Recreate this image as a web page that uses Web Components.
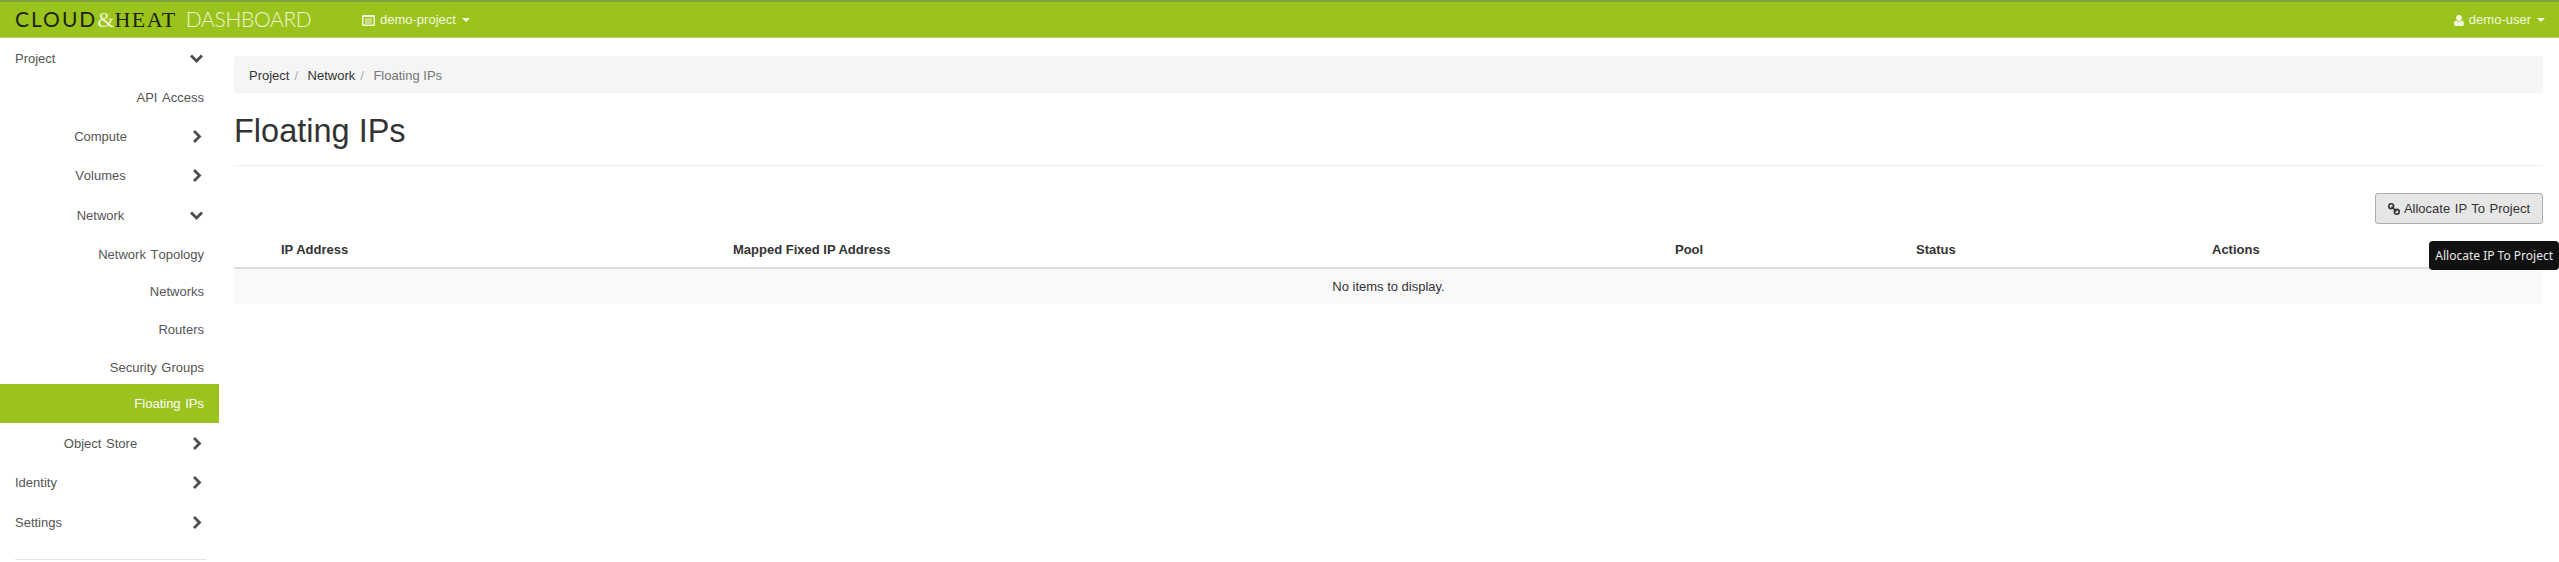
<!DOCTYPE html>
<html>
<head>
<meta charset="utf-8">
<title>Floating IPs</title>
<style>
  html, body { margin: 0; padding: 0; background: #fff; }
  body { font: 13px/18px "Liberation Sans", Arial, sans-serif; color: #333; height: 562px; overflow: hidden; }
</style>
</head>
<body>
<app-shell>
  <top-bar slot="top"></top-bar>
  <side-nav slot="side">
    <nav-row kind="head" h="40" open>Project</nav-row>
    <nav-row h="38">API Access</nav-row>
    <nav-row kind="group" h="40">Compute</nav-row>
    <nav-row kind="group" h="39">Volumes</nav-row>
    <nav-row kind="group" h="40" open>Network</nav-row>
    <nav-row h="38">Network Topology</nav-row>
    <nav-row h="37">Networks</nav-row>
    <nav-row h="38">Routers</nav-row>
    <nav-row h="36" nudge="3">Security Groups</nav-row>
    <nav-row h="39" active>Floating IPs</nav-row>
    <nav-row kind="group" h="40">Object Store</nav-row>
    <nav-row kind="head" h="39">Identity</nav-row>
    <nav-row kind="head" h="40">Settings</nav-row>
  </side-nav>
  <floating-page slot="main"></floating-page>
</app-shell>

<script>
class AppShell extends HTMLElement {
  constructor() {
    super();
    this.attachShadow({ mode: 'open' });
    this.shadowRoot.innerHTML = `
      <style>
        :host { display: block; }
        .body { display: flex; align-items: flex-start; }
        .side { flex: 0 0 219px; }
        .main { flex: 1; min-width: 0; padding: 0 16px 0 15px; }
      </style>
      <slot name="top"></slot>
      <div class="body">
        <div class="side"><slot name="side"></slot></div>
        <div class="main"><slot name="main"></slot></div>
      </div>
    `;
  }
}

class TopBar extends HTMLElement {
  constructor() {
    super();
    this.attachShadow({ mode: 'open' });
    this.shadowRoot.innerHTML = `
      <style>
        :host { display: flex; align-items: center; height: 38px; box-sizing: border-box; background: #9bc31e;
          border-top: 2px solid #7f9f45; border-bottom: 1px solid #c3d27c; color: #f3f8df; font-size: 13px; }
        .logo { margin-left: 15px; width: 347px; font-size: 21px; line-height: 24px; white-space: nowrap; flex: none; }
        .c { font-family: "Lato", sans-serif; color: #1c2410; letter-spacing: 2px; }
        .h { font-family: "Liberation Serif", serif; font-size: 22px; color: #1c2410; letter-spacing: 1.5px; }
        .a { font-family: "Liberation Serif", serif; font-size: 22px; color: #eef5d0; }
        .d { font-family: "Lato", sans-serif; font-weight: 300; color: #eef5d0; margin-left: 9px; letter-spacing: -.3px; }
        .menu { display: flex; align-items: center; gap: 5px; padding-top: 1px; }
        .spacer { flex: 1; }
        .caret { width: 0; height: 0; border: 4px solid transparent; border-top-color: #f3f8df; border-bottom: 0; margin-left: 1px; }
        svg { display: block; fill: #f3f8df; }
        .user { margin-right: 14px; }
      </style>
      <div class="logo"><span class="c">CLOUD</span><span class="a">&amp;</span><span class="h">HEAT</span><span class="d">DASHBOARD</span></div>
      <div class="menu">
        <svg width="13" height="11" viewBox="0 0 13 11"><path fill-rule="evenodd" d="M1 0h11a1 1 0 0 1 1 1v9a1 1 0 0 1-1 1H1a1 1 0 0 1-1-1V1a1 1 0 0 1 1-1zm.5 2v7.500h10V2zM3 3.500h7v1H3zM3 5.500h7v1H3zM3 7.500h7v1H3z"/></svg>
        <span>demo-project</span><i class="caret"></i>
      </div>
      <div class="spacer"></div>
      <div class="menu user">
        <svg width="10" height="11" viewBox="0 0 10 11"><path d="M5 0a2.800 2.800 0 0 1 2.800 3C7.800 4.600 6.600 6 5 6S2.200 4.600 2.200 3A2.800 2.800 0 0 1 5 0zM2.300 5.600C3 6.300 4 6.800 5 6.800s2-.5 2.700-1.200C9.200 5.800 10 7 10 9c0 1.300-.8 2-2 2H2c-1.200 0-2-.7-2-2 0-2 .8-3.200 2.300-3.400z"/></svg>
        <span>demo-user</span><i class="caret"></i>
      </div>
    `;
  }
}

class SideNav extends HTMLElement {
  constructor() {
    super();
    this.attachShadow({ mode: 'open' });
    this.shadowRoot.innerHTML = `
      <style>
        :host { display: block; }
        hr { border: 0; border-top: 1px solid #e4e4e4; margin: 17px 13px 0 15px; }
      </style>
      <slot></slot>
      <hr>
    `;
  }
}

class NavRow extends HTMLElement {
  constructor() {
    super();
    this.attachShadow({ mode: 'open' });
    const kind = this.getAttribute('kind') || 'item';
    const chevron = this.hasAttribute('open') ? 'M2 4.500 7.500 10 13 4.500' : 'M5 2l5.500 5.500L5 13';
    const icon = kind === 'item' ? '' :
      `<svg width="15" height="15" viewBox="0 0 15 15"><path d="${chevron}" fill="none" stroke="#4d4d4d" stroke-width="2.800"/></svg>`;
    this.shadowRoot.innerHTML = `
      <style>
        :host { display: block; color: #555; word-spacing: 1px; font-kerning: none; }
        .row { display: flex; align-items: center; height: var(--h); box-sizing: border-box; padding: var(--n) 15px 0 0; }
        .label { flex: 1; }
        .item .label { text-align: right; }
        .group .label { text-align: center; margin-right: -12px; }
        .head { padding-left: 15px; }
        svg { display: block; flex: none; margin-top: -1px; }
        .active { background: #9bc31e; color: #fff; }
      </style>
      <div class="row ${kind} ${this.hasAttribute('active') ? 'active' : ''}" style="--h:${this.getAttribute('h')}px;--n:${this.getAttribute('nudge') || 1}px">
        <span class="label"><slot></slot></span>${icon}
      </div>
    `;
  }
}

class BreadCrumb extends HTMLElement {
  constructor() {
    super();
    this.attachShadow({ mode: 'open' });
    this.shadowRoot.innerHTML = `
      <style>
        :host { display: block; background: #f5f5f5; border-radius: 2px; height: 37px; line-height: 40px; padding: 0 15px; margin-top: 18px; }
        .s { color: #aaa; padding: 0 9.5px 0 5px; }
        .cur { color: #777; }
      </style>
      <span>Project</span><span class="s">/</span><span>Network</span><span class="s">/</span><span class="cur">Floating IPs</span>
    `;
  }
}

class DataTable extends HTMLElement {
  constructor() {
    super();
    this.attachShadow({ mode: 'open' });
    this.shadowRoot.innerHTML = `
      <style>
        :host { display: block; }
        .head { display: grid; grid-template-columns: 47px 452px 942px 241px 296px 1fr; height: 34px; padding-top: 9px; align-items: center;
          font-weight: bold; border-bottom: 2px solid #ddd; box-sizing: content-box; }
        .empty { background: #f9f9f9; height: 35px; line-height: 35px; text-align: center; }
      </style>
      <div class="head">
        <span></span><span>IP Address</span><span>Mapped Fixed IP Address</span><span>Pool</span><span>Status</span><span>Actions</span>
      </div>
      <div class="empty">No items to display.</div>
    `;
  }
}

class FloatingPage extends HTMLElement {
  constructor() {
    super();
    this.attachShadow({ mode: 'open' });
    this.shadowRoot.innerHTML = `
      <style>
        :host { display: block; position: relative; }
        h1 { margin: 0; font-size: 32.5px; font-weight: normal; line-height: 40px; color: #333; padding: 18px 0 14px; border-bottom: 1px solid #eee; }
        .actions { display: flex; justify-content: flex-end; margin-top: 27px; }
        button { display: flex; align-items: center; gap: 4px; height: 31px; box-sizing: border-box; padding: 0 12px; font: inherit; color: #333;
          background: #e6e6e6; border: 1px solid #adadad; border-radius: 3px; word-spacing: 1px; }
        svg { display: block; }
        .tip { position: absolute; right: -16px; top: 185px; height: 29px; padding: 0 6px; background: #111; color: #e8e8e8;
          font: 12px/29px "Noto Sans", sans-serif; border-radius: 4px; white-space: nowrap; }
      </style>
      <bread-crumb></bread-crumb>
      <h1>Floating IPs</h1>
      <div class="actions">
        <button>
          <svg width="12" height="12" viewBox="0 0 12 12" fill="none" stroke="#333" stroke-width="1.600"><circle cx="3.200" cy="3.200" r="2.400"/><circle cx="8.800" cy="8.800" r="2.400"/><path d="M3.500 3.500l5 5"/></svg>
          Allocate IP To Project
        </button>
      </div>
      <data-table></data-table>
      <div class="tip">Allocate IP To Project</div>
    `;
  }
}

customElements.define('app-shell', AppShell);
customElements.define('top-bar', TopBar);
customElements.define('side-nav', SideNav);
customElements.define('nav-row', NavRow);
customElements.define('bread-crumb', BreadCrumb);
customElements.define('data-table', DataTable);
customElements.define('floating-page', FloatingPage);
</script>
</body>
</html>
